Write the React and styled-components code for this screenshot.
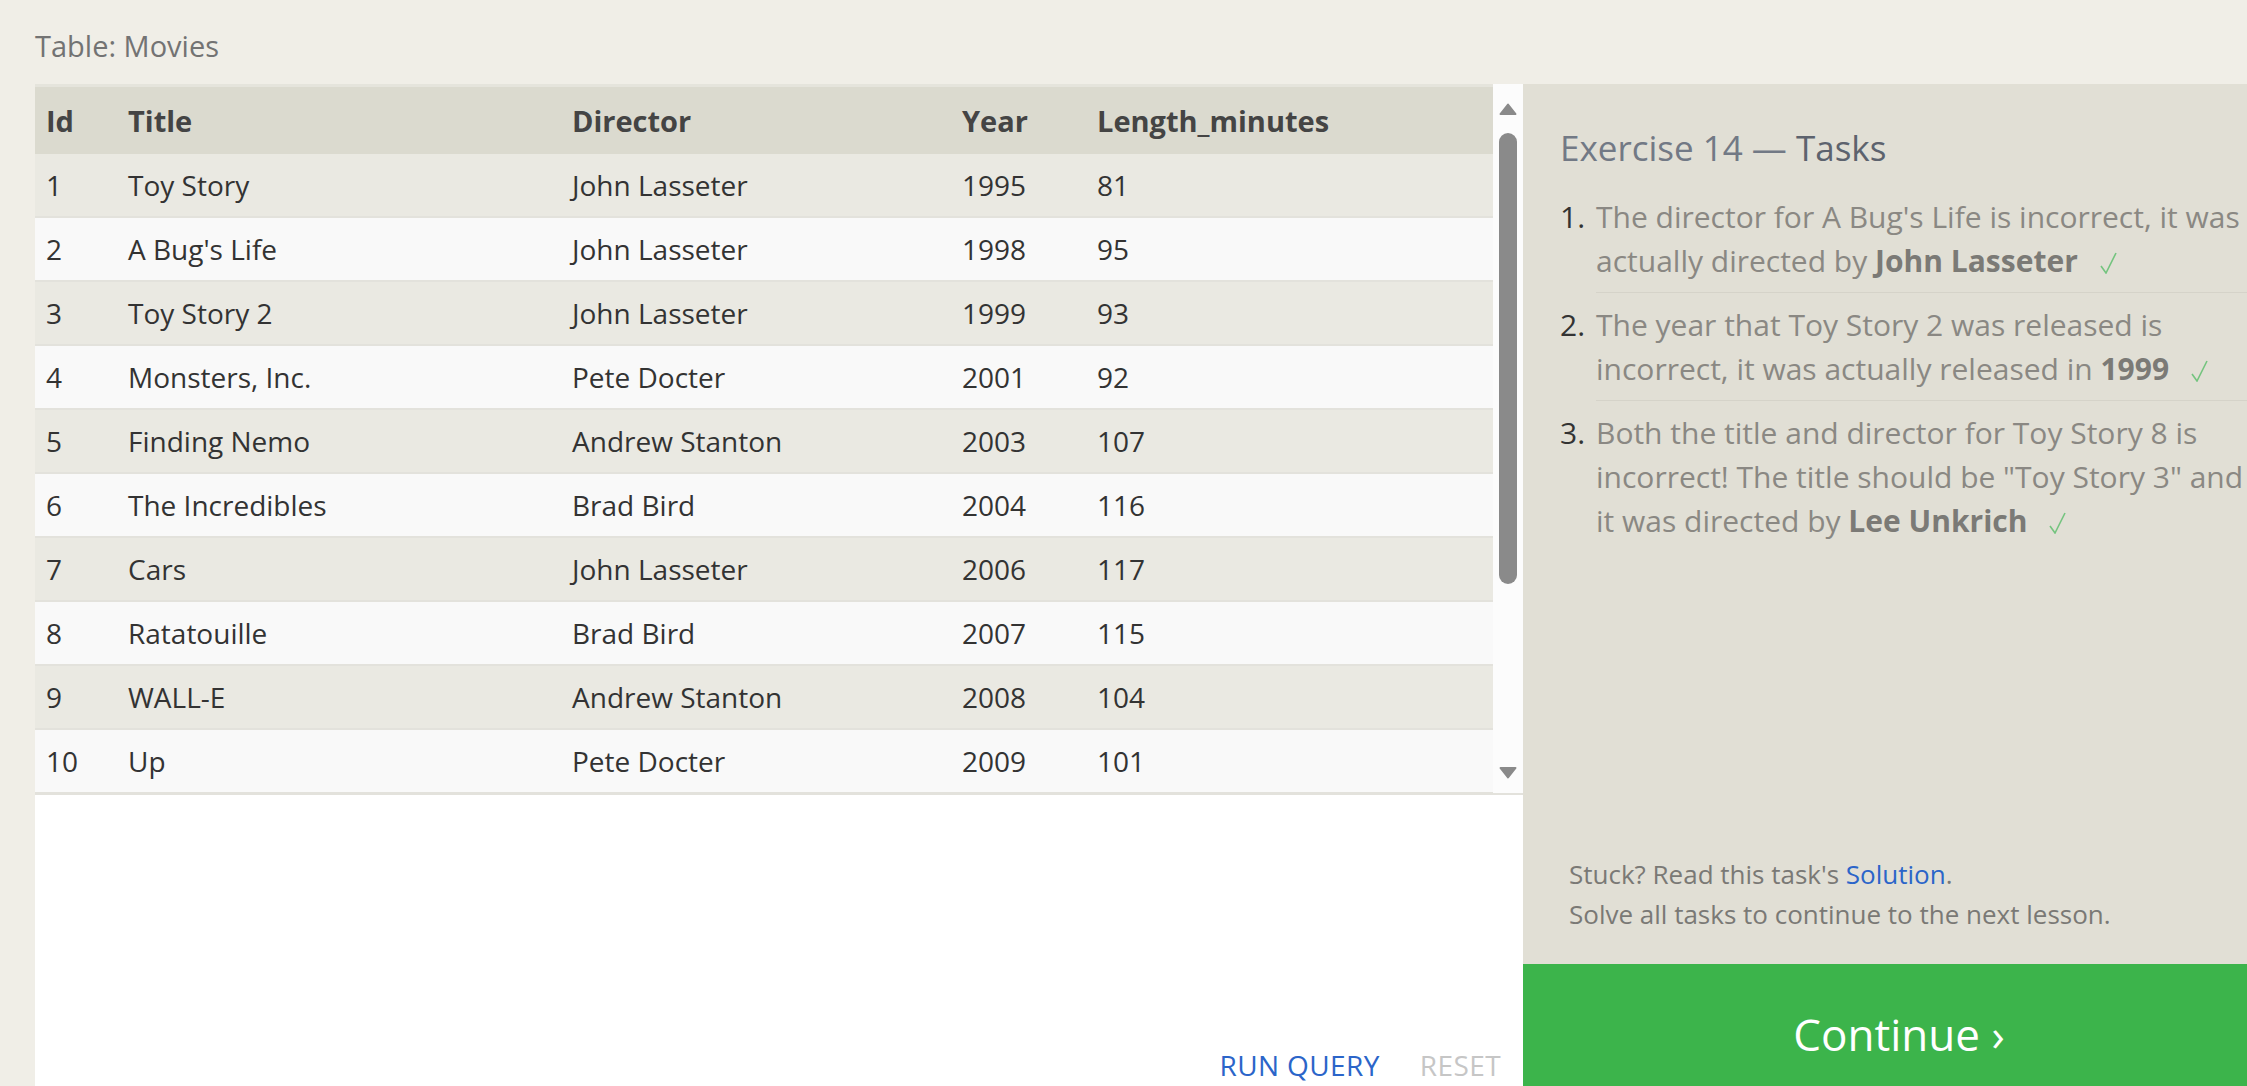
import React from 'react';
import styled, { createGlobalStyle } from 'styled-components';

const GlobalStyle = createGlobalStyle`
  html, body {
    margin: 0;
    padding: 0;
    background: #f0eee7;
    overflow: hidden;
    font-family: "Open Sans", "Noto Sans", sans-serif;
  }
`;

const movies = [
  { id: 1, title: "Toy Story", director: "John Lasseter", year: 1995, length: 81 },
  { id: 2, title: "A Bug's Life", director: "John Lasseter", year: 1998, length: 95 },
  { id: 3, title: "Toy Story 2", director: "John Lasseter", year: 1999, length: 93 },
  { id: 4, title: "Monsters, Inc.", director: "Pete Docter", year: 2001, length: 92 },
  { id: 5, title: "Finding Nemo", director: "Andrew Stanton", year: 2003, length: 107 },
  { id: 6, title: "The Incredibles", director: "Brad Bird", year: 2004, length: 116 },
  { id: 7, title: "Cars", director: "John Lasseter", year: 2006, length: 117 },
  { id: 8, title: "Ratatouille", director: "Brad Bird", year: 2007, length: 115 },
  { id: 9, title: "WALL-E", director: "Andrew Stanton", year: 2008, length: 104 },
  { id: 10, title: "Up", director: "Pete Docter", year: 2009, length: 101 },
];

const columns = [
  { key: 'id', label: 'Id', width: 82 },
  { key: 'title', label: 'Title', width: 444 },
  { key: 'director', label: 'Director', width: 390 },
  { key: 'year', label: 'Year', width: 135 },
  { key: 'length', label: 'Length_minutes', width: 407 },
];

const Page = styled.div`
  display: flex;
  flex-direction: column;
  padding-left: 35px;
`;

const Caption = styled.div`
  height: 84px;
  display: flex;
  align-items: center;
  font-size: 29px;
  color: #737373;
  padding-top: 6px;
  box-sizing: border-box;
`;

const Workspace = styled.div`
  display: flex;
  height: 1020px;
`;

const LeftPanel = styled.div`
  width: 1488px;
  flex: none;
  background: #fff;
  display: flex;
  flex-direction: column;
`;

const ScrollArea = styled.div`
  display: flex;
  height: 709px;
  border-bottom: 2px solid #e3e2dc;
  overflow: hidden;
`;

const Table = styled.table`
  width: 1458px;
  flex: none;
  border-collapse: collapse;
  table-layout: fixed;
  font-size: 28px;
  color: #333;
  align-self: flex-start;
`;

const HeadCell = styled.th`
  height: 67px;
  padding: 0 0 0 11px;
  text-align: left;
  font-size: 29px;
  font-weight: 700;
  color: #444;
  background: #dbdacf;
  border-top: 3px solid #e5e4dc;
`;

const Row = styled.tr`
  background: ${p => (p.$odd ? '#eae9e2' : '#f9f9f9')};
  border-bottom: 2px solid #e3e2dc;
`;

const Cell = styled.td`
  height: 62px;
  padding: 0 0 0 11px;
  white-space: nowrap;
`;

const Scrollbar = styled.div`
  width: 30px;
  flex: none;
  background: #fcfcfc;
  display: flex;
  flex-direction: column;
  align-items: center;
  padding: 19px 0 9px;
  box-sizing: border-box;
`;

const Thumb = styled.div`
  width: 18px;
  height: 451px;
  margin-top: 18px;
  border-radius: 9px;
  background: #8a8a8a;
`;

const ArrowDown = styled.div`
  margin-top: auto;
`;

const Actions = styled.div`
  margin-top: auto;
  display: flex;
  justify-content: flex-end;
  gap: 40px;
  padding: 0 22px 18px 0;
  font-size: 28px;
  line-height: 42px;
`;

const ActionLink = styled.span`
  color: ${p => (p.$muted ? '#c6c6c6' : '#2b65c9')};
  letter-spacing: 0.4px;
`;

const RightPanel = styled.div`
  width: 752px;
  flex: none;
  background: #e1dfd5;
  display: flex;
  flex-direction: column;
`;

const Tasks = styled.div`
  padding: 42px 0 0 37px;
`;

const TasksTitle = styled.div`
  font-size: 35px;
  line-height: 43px;
  color: #727985;

  span {
    color: #5d636e;
  }
`;

const TaskList = styled.ol`
  list-style: none;
  margin: 16px 0 0;
  padding: 0;
`;

const TaskItem = styled.li`
  display: flex;
  font-size: 30px;
  line-height: 44px;
`;

const TaskNumber = styled.span`
  width: 36px;
  flex: none;
  color: #333;
  padding-top: 10px;
`;

const TaskText = styled.div`
  flex: 1;
  color: #8a8883;
  white-space: nowrap;
  padding: 10px 0 9px;
  border-bottom: ${p => (p.$last ? 'none' : '1px solid #d5d3c9')};

  b {
    color: #7b7a76;
    font-weight: 700;
  }
`;

const Check = styled.svg`
  width: 17px;
  height: 22px;
  margin-left: 22px;
  vertical-align: -2px;
`;

const Help = styled.div`
  margin-top: auto;
  padding: 0 0 30px 46px;
  font-size: 26px;
  line-height: 40px;
  color: #7a7975;

  a {
    color: #2b65c9;
    text-decoration: none;
  }
`;

const ContinueButton = styled.div`
  height: 140px;
  flex: none;
  background: #3cb44b;
  color: #fff;
  font-size: 44px;
  display: flex;
  align-items: center;
  justify-content: center;
`;

const CheckMark = () => (
  <Check viewBox="0 0 17 22">
    <polyline points="1,14 6,21 16,1" fill="none" stroke="#74c47f" strokeWidth="1.6" />
  </Check>
);

const tasks = [
  [
    'The director for A Bug\'s Life is incorrect, it was',
    <>actually directed by <b>John Lasseter</b><CheckMark /></>,
  ],
  [
    'The year that Toy Story 2 was released is',
    <>incorrect, it was actually released in <b>1999</b><CheckMark /></>,
  ],
  [
    'Both the title and director for Toy Story 8 is',
    'incorrect! The title should be "Toy Story 3" and',
    <>it was directed by <b>Lee Unkrich</b><CheckMark /></>,
  ],
];

export default function App() {
  return (
    <Page>
      <GlobalStyle />
      <Caption>Table: Movies</Caption>
      <Workspace>
        <LeftPanel>
          <ScrollArea>
            <Table>
              <colgroup>
                {columns.map(c => <col key={c.key} style={{ width: c.width }} />)}
              </colgroup>
              <thead>
                <tr>
                  {columns.map(c => <HeadCell key={c.key}>{c.label}</HeadCell>)}
                </tr>
              </thead>
              <tbody>
                {movies.map((m, i) => (
                  <Row key={m.id} $odd={i % 2 === 0}>
                    {columns.map(c => <Cell key={c.key}>{m[c.key]}</Cell>)}
                  </Row>
                ))}
              </tbody>
            </Table>
            <Scrollbar>
              <svg width="18" height="12" viewBox="0 0 18 12">
                <path d="M9 1.5 L16.5 11 L1.5 11 Z" fill="#8a8a8a" stroke="#8a8a8a" strokeWidth="2" strokeLinejoin="round" />
              </svg>
              <Thumb />
              <ArrowDown>
                <svg width="18" height="12" viewBox="0 0 18 12">
                  <path d="M1.5 1 L16.5 1 L9 10.5 Z" fill="#8a8a8a" stroke="#8a8a8a" strokeWidth="2" strokeLinejoin="round" />
                </svg>
              </ArrowDown>
            </Scrollbar>
          </ScrollArea>
          <Actions>
            <ActionLink>RUN QUERY</ActionLink>
            <ActionLink $muted>RESET</ActionLink>
          </Actions>
        </LeftPanel>
        <RightPanel>
          <Tasks>
            <TasksTitle>Exercise 14 — <span>Tasks</span></TasksTitle>
            <TaskList>
              {tasks.map((lines, i) => (
                <TaskItem key={i}>
                  <TaskNumber>{i + 1}.</TaskNumber>
                  <TaskText $last={i === tasks.length - 1}>
                    {lines.map((line, j) => <div key={j}>{line}</div>)}
                  </TaskText>
                </TaskItem>
              ))}
            </TaskList>
          </Tasks>
          <Help>
            <div>Stuck? Read this task's <a href="#">Solution</a>.</div>
            <div>Solve all tasks to continue to the next lesson.</div>
          </Help>
          <ContinueButton>Continue ›</ContinueButton>
        </RightPanel>
      </Workspace>
    </Page>
  );
}
